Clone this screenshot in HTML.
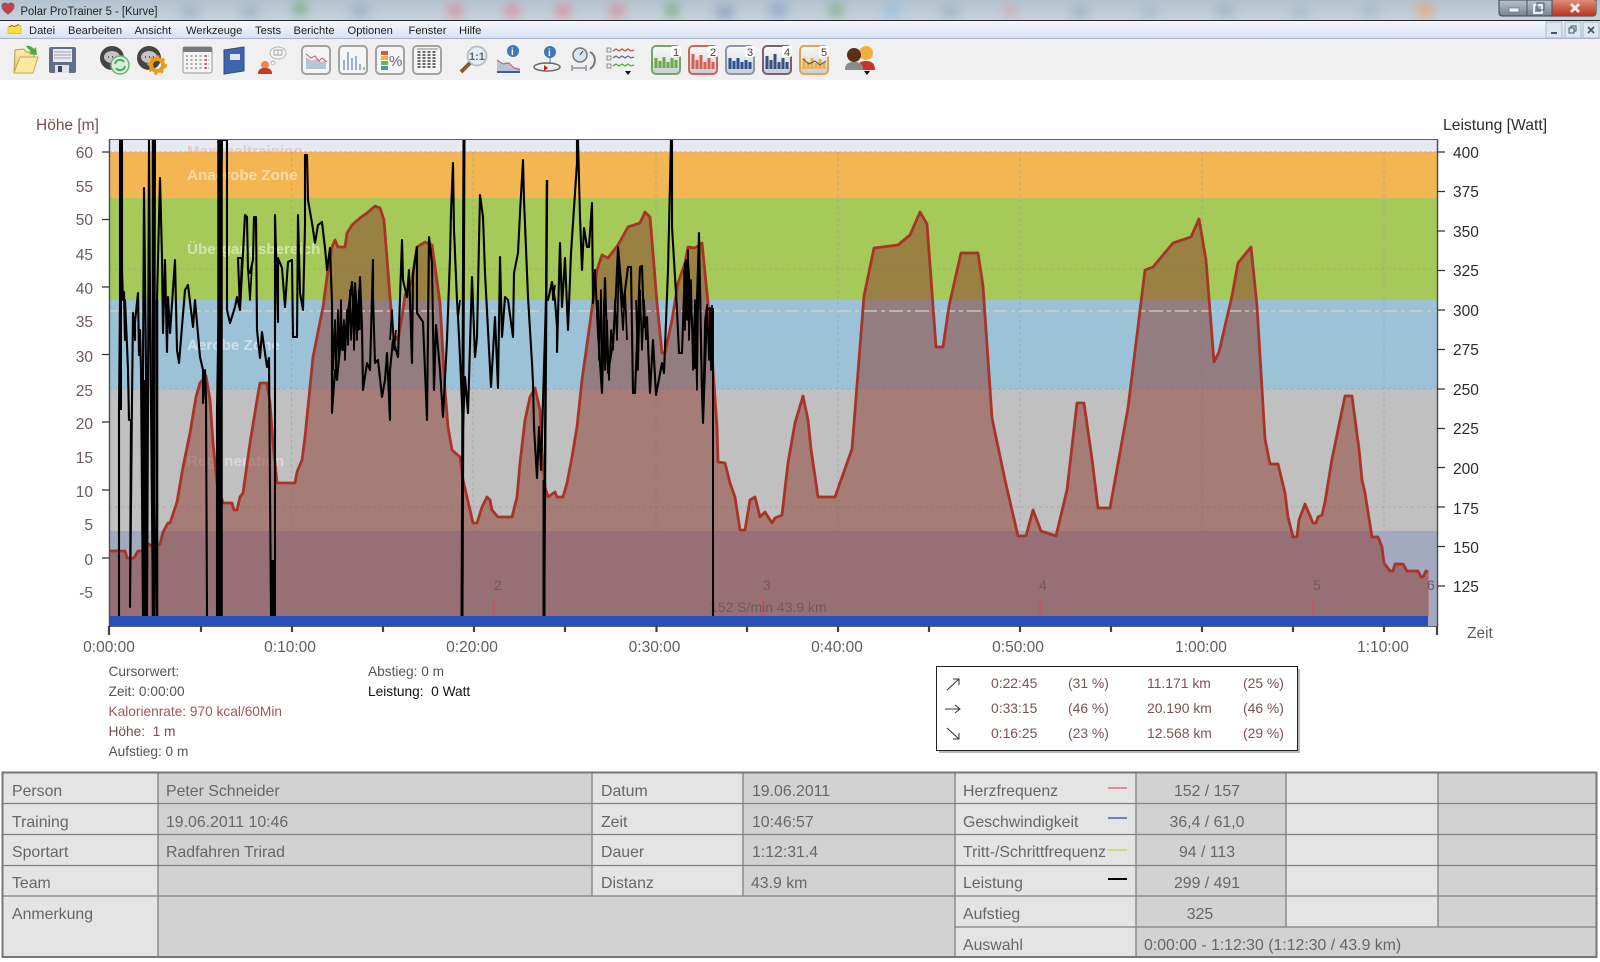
<!DOCTYPE html>
<html lang="de"><head><meta charset="utf-8"><title>Polar ProTrainer 5 - [Kurve]</title>
<style>
html,body{margin:0;padding:0;background:#fff;width:1600px;height:962px;overflow:hidden}
svg{display:block}
text{font-family:"Liberation Sans",sans-serif}
.m{font-size:11.2px;fill:#222}
.l{font-size:15.5px;fill:#6b5b5e}
.r{font-size:15.5px;fill:#2c2c2c}
.b{font-size:15.5px;fill:#5e5e5e}
.z{font-size:15.2px;font-weight:bold;fill:#fff;fill-opacity:.5}
.i{font-size:13.7px;fill:#555}
.x{font-size:13.9px;fill:#7d5255}
.t{font-size:15.85px;fill:#666}
.lap{font-size:14px;fill:#6e585e}
</style></head><body>
<svg width="1600" height="962" viewBox="0 0 1600 962" xmlns="http://www.w3.org/2000/svg">
<defs>
<filter id="bl" x="-50%" y="-50%" width="200%" height="200%"><feGaussianBlur stdDeviation="5"/></filter>
<linearGradient id="tb" x1="0" y1="0" x2="0" y2="1"><stop offset="0" stop-color="#b3c2cf"/><stop offset="1" stop-color="#c6d3dd"/></linearGradient>
<linearGradient id="mb" x1="0" y1="0" x2="0" y2="1"><stop offset="0" stop-color="#f5f8fd"/><stop offset="1" stop-color="#d9e2f0"/></linearGradient>
<linearGradient id="cl" x1="0" y1="0" x2="0" y2="1"><stop offset="0" stop-color="#e08a78"/><stop offset="1" stop-color="#b83320"/></linearGradient>
<linearGradient id="wb" x1="0" y1="0" x2="0" y2="1"><stop offset="0" stop-color="#b8c4cc"/><stop offset="1" stop-color="#75838e"/></linearGradient>
<linearGradient id="ic" x1="0" y1="0" x2="0" y2="1"><stop offset="0" stop-color="#fbfbfb"/><stop offset="1" stop-color="#c9ced6"/></linearGradient>
<linearGradient id="fo" x1="0" y1="0" x2="0" y2="1"><stop offset="0" stop-color="#fdf0b4"/><stop offset="1" stop-color="#e2bd5c"/></linearGradient>
<clipPath id="plot"><rect x="109" y="140" width="1328" height="486"/></clipPath>
</defs>

<!-- title bar -->
<rect width="1600" height="20" fill="url(#tb)"/>
<g filter="url(#bl)" opacity=".6">
<ellipse cx="300" cy="8" rx="7" ry="8" fill="#5d9e5a"/><ellipse cx="190" cy="12" rx="10" ry="6" fill="#8fa4bd"/><ellipse cx="250" cy="12" rx="10" ry="6" fill="#8fa4bd"/><ellipse cx="360" cy="11" rx="11" ry="6" fill="#8a9cc0"/>
<ellipse cx="455" cy="11" rx="8" ry="7" fill="#e8707c"/><ellipse cx="512" cy="11" rx="8" ry="7" fill="#e8707c"/><ellipse cx="563" cy="11" rx="8" ry="7" fill="#e8707c"/><ellipse cx="617" cy="11" rx="8" ry="7" fill="#e8707c"/>
<ellipse cx="672" cy="10" rx="7" ry="8" fill="#5d9e5a"/><ellipse cx="725" cy="12" rx="10" ry="6" fill="#6d86ac"/><ellipse cx="778" cy="10" rx="10" ry="8" fill="#7a9cc4"/><ellipse cx="836" cy="10" rx="7" ry="8" fill="#6aa060"/><ellipse cx="892" cy="11" rx="10" ry="7" fill="#86bee0"/>
<ellipse cx="950" cy="12" rx="10" ry="6" fill="#8fa4bd"/><ellipse cx="1010" cy="11" rx="8" ry="7" fill="#d8a0a8"/><ellipse cx="1080" cy="12" rx="10" ry="6" fill="#8fa4bd"/><ellipse cx="1150" cy="12" rx="10" ry="6" fill="#9ab0c4"/><ellipse cx="1225" cy="11" rx="10" ry="6" fill="#8fa4bd"/><ellipse cx="1300" cy="12" rx="10" ry="6" fill="#9ab0c4"/><ellipse cx="1370" cy="11" rx="10" ry="6" fill="#9ab0c4"/>
<ellipse cx="1425" cy="10" rx="10" ry="8" fill="#eca060"/>
</g>
<path d="M8 14c-4-3-6-5-6-8 0-2 2-3 3-3s2 .5 3 1.500c1-1 2-1.500 3-1.500s3 1 3 3c0 3-2 5-6 8z" fill="#c8404c" stroke="#7c5a60"/>
<text x="20.500" y="15" fill="#1c2228" style="font-size:11.5px" textLength="137" lengthAdjust="spacingAndGlyphs">Polar ProTrainer 5 - [Kurve]</text>
<!-- window buttons -->
<path d="M1499 0v13a3 3 0 0 0 3 3h91a3 3 0 0 0 3-3v-13z" fill="url(#wb)" stroke="#3a4148"/>
<rect x="1552" y="0" width="44" height="16" rx="2" fill="url(#cl)"/>
<path d="M1527 0v16M1552 0v16" stroke="#4a5058"/>
<rect x="1509" y="8" width="10" height="4" fill="#eef2f4" stroke="#55606a" stroke-width=".6"/>
<rect x="1534" y="5" width="8" height="8" fill="none" stroke="#e8eef2" stroke-width="2"/><rect x="1537" y="3" width="7" height="7" fill="none" stroke="#40484f" stroke-width=".8"/>
<path d="M1571 4l8 8M1579 4l-8 8" stroke="#f4e8df" stroke-width="3"/>
<!-- menu bar -->
<rect y="20" width="1600" height="1.500" fill="#222"/>
<rect y="21" width="1600" height="17" fill="url(#mb)"/>
<rect y="38" width="1600" height="1" fill="#aab0c6"/>
<path d="M8 27l4-2 2 1.500 4-1.500 3 .5v8H8z" fill="#f6e23e" stroke="#d8b830" stroke-width=".7"/><path d="M9 27l3-1.500 2 1 5-2" fill="none" stroke="#c83a30" stroke-width=".9"/>
<text class="m" x="29" y="34">Datei</text><text class="m" x="68" y="34">Bearbeiten</text><text class="m" x="134.500" y="34">Ansicht</text><text class="m" x="186" y="34">Werkzeuge</text><text class="m" x="255" y="34">Tests</text><text class="m" x="293.500" y="34">Berichte</text><text class="m" x="347.500" y="34">Optionen</text><text class="m" x="408.500" y="34">Fenster</text><text class="m" x="459" y="34">Hilfe</text>
<g fill="#dde7f2" stroke="#a9b7c4"><rect x="1546" y="22" width="16" height="16"/><rect x="1565" y="22" width="16" height="16"/><rect x="1583" y="22" width="16" height="16"/></g>
<path d="M1551 33h6" stroke="#45566a" stroke-width="2"/><path d="M1569 28h5v5h-5zM1571 28v-2h5v5h-2" fill="none" stroke="#45566a"/><path d="M1588 27l6 6M1594 27l-6 6" stroke="#45566a" stroke-width="1.800"/>

<!-- toolbar -->
<rect y="39" width="1600" height="41" fill="#f0f0f0"/>
<!-- open -->
<path d="M15 50l9-1 2 3 8 0v5l4 0-6 16H14z" fill="url(#fo)" stroke="#b0985c"/><path d="M20 57h18l-5 16H14z" fill="#fae9a0" stroke="#caa850"/><path d="M26 46c4-1 6 1 8 3l2-2 1 8-8-1 2-2c-1-2-3-3-5-6z" fill="#55a83e"/>
<!-- save -->
<rect x="49" y="47" width="27" height="26" rx="2" fill="#5f6f86"/><rect x="53" y="49" width="19" height="13" fill="#e9ebef"/><path d="M54 52h17M54 55h17M54 58h17" stroke="#9aa2b0"/><rect x="55" y="65" width="14" height="8" fill="#dfe2e6"/><rect x="58" y="66" width="4" height="6" fill="#3b4452"/>
<!-- chat refresh -->
<circle cx="112" cy="58" r="12" fill="#444"/><ellipse cx="112" cy="57" rx="8" ry="6" fill="#c4c4c8"/><path d="M108 57h1M112 57h1M116 57h1" stroke="#333" stroke-width="1.500"/><circle cx="120" cy="65" r="9" fill="#d8efd8" stroke="#73b078" stroke-width="1.500"/><path d="M115 64a5 5 0 0 1 9-2M125 66a5 5 0 0 1-9 2" fill="none" stroke="#4ea85a" stroke-width="2"/>
<!-- chat gear -->
<circle cx="149" cy="58" r="12" fill="#444"/><ellipse cx="149" cy="57" rx="8" ry="6" fill="#c4c4c8"/><path d="M145 57h1M149 57h1M153 57h1" stroke="#333" stroke-width="1.500"/><circle cx="157" cy="65" r="6" fill="none" stroke="#e89c1a" stroke-width="4"/><circle cx="157" cy="65" r="8.500" fill="none" stroke="#e89c1a" stroke-width="2.500" stroke-dasharray="3 3.500"/>
<!-- calendar -->
<rect x="183" y="47" width="29" height="26" rx="2" fill="#f4f4f4" stroke="#999"/><rect x="183" y="47" width="29" height="5" fill="#77797e"/><g fill="none" stroke="#a9a9b0" stroke-width="2" stroke-dasharray="2 2.500"><path d="M186 56h23M186 60h23M186 64h23M186 68h23"/></g><path d="M206 55v15" stroke="#d56d6d" stroke-width="2" stroke-dasharray="2 2"/>
<!-- book -->
<path d="M224 50l20-3v24l-20 3z" fill="#3e65ad" stroke="#2d4c88"/><rect x="230" y="54" width="10" height="6" fill="#dfe6f0"/>
<!-- person bubble -->
<circle cx="265" cy="65" r="4" fill="#e8874f"/><path d="M258 74c0-5 3-6 7-6s7 1 7 6z" fill="#c63a28"/><ellipse cx="278" cy="53" rx="8" ry="6" fill="#f6f6f6" stroke="#b5b5b5"/><path d="M274 50h8v5h-8zM278 50v5" fill="none" stroke="#888" stroke-width=".7"/><circle cx="273" cy="63" r="2" fill="#f6f6f6" stroke="#b5b5b5"/>
<!-- framed -->
<g fill="#f5f5f5" stroke="#a2a2a2" stroke-width="2"><rect x="302" y="46" width="28" height="28" rx="4"/><rect x="339" y="46" width="28" height="28" rx="4"/><rect x="376" y="46" width="28" height="28" rx="4"/><rect x="413" y="46" width="28" height="28" rx="4"/></g>
<path d="M306 57l6 4 5-3 4 4 5-2v9h-20z" fill="#b7c4d6"/><path d="M306 54l5 4 4-2 4 5 3-3 5 4" fill="none" stroke="#d2585e"/>
<path d="M344 70V60M348 70V52M352 70V58M356 70V56M360 70V64M364 70V67" stroke="#9fb1c6" stroke-width="2"/>
<rect x="381" y="51" width="7" height="4" fill="#d8543c"/><rect x="381" y="56" width="7" height="4" fill="#eab53c"/><rect x="381" y="61" width="7" height="4" fill="#74b04a"/><rect x="381" y="66" width="7" height="4" fill="#5d8cc0"/><text x="389" y="66" fill="#667" style="font-size:15px">%</text>
<g stroke="#666" stroke-width="3" stroke-dasharray="2 1"><path d="M419 51v18M424 51v18M429 51v18M434 51v18"/></g><path d="M417 49h21" stroke="#888"/>
<!-- magnifier -->
<circle cx="477" cy="56" r="9.500" fill="#e6eef5" stroke="#b5c2cc" stroke-width="2"/><text x="469" y="60" style="font-size:11px" fill="#666" font-weight="bold">1:1</text><path d="M470 63l-9 9" stroke="#8a5a28" stroke-width="4"/>
<!-- info chart -->
<circle cx="513" cy="51" r="6" fill="#3e78b8"/><text x="511" y="55" style="font-size:10px" fill="#fff" font-weight="bold">i</text><path d="M497 72v-12l6 3 5-1 6 5 6 1v4z" fill="#b7c4d6"/><path d="M497 60l6 4 6-1 5 5 6 2" fill="none" stroke="#d2585e"/><path d="M497 72h23" stroke="#3d5e98" stroke-width="2"/>
<!-- info ellipse -->
<circle cx="550" cy="52" r="6" fill="#3e78b8"/><text x="548" y="56" style="font-size:10px" fill="#fff" font-weight="bold">i</text><path d="M550 58v6" stroke="#3e78b8"/><ellipse cx="547" cy="67" rx="13" ry="4" fill="none" stroke="#666" stroke-width="1.500"/><path d="M544 65l4 3-4 3z" fill="#c22"/>
<!-- dial -->
<circle cx="580" cy="55" r="7" fill="#d5e6f2" stroke="#777" stroke-width="1.500"/><path d="M580 55l3-4" stroke="#333"/><path d="M572 68h14M572 65v6M586 65v6" stroke="#a0a8b6" stroke-width="2"/><path d="M590 52c6 3 7 12 0 17" fill="none" stroke="#777" stroke-width="2"/>
<!-- lines -->
<g fill="none" stroke-width="1.200"><path d="M613 51l3-2 3 2 3-2 3 2 3-2 3 2 3-1" stroke="#d8453c"/><path d="M613 58l3-2 3 2 3-2 3 2 3-2 3 2 3-1" stroke="#4e6aa0"/><path d="M613 66l3-2 3 2 3-2 3 2 3-2 3 2 3-1" stroke="#5a9e48"/></g><g fill="#eee" stroke="#777" stroke-width=".8"><rect x="607" y="48" width="4" height="4"/><rect x="607" y="56" width="4" height="4"/><rect x="607" y="64" width="4" height="4"/></g><path d="M625 71h6l-3 4z" fill="#111"/>
<!-- numbered -->
<g stroke-width="2" fill="url(#ic)"><rect x="652" y="46" width="28" height="28" rx="4" stroke="#6fa860"/><rect x="689" y="46" width="28" height="28" rx="4" stroke="#d0645c"/><rect x="726" y="46" width="28" height="28" rx="4" stroke="#8a96a8"/><rect x="763" y="46" width="28" height="28" rx="4" stroke="#7d6070"/><rect x="800" y="46" width="28" height="28" rx="4" stroke="#e8a056"/></g>
<path d="M656 68V58M660 68V61M664 68V57M668 68V62M672 68V58M676 68V60" stroke="#6aa844" stroke-width="3"/>
<path d="M693 69V54M697 69V60M701 69V55M705 69V62M709 69V58M713 69V62" stroke="#d8604e" stroke-width="3"/>
<path d="M730 69V58M734 69V61M738 69V58M742 69V62M746 69V60M750 69V62" stroke="#2a4f90" stroke-width="3"/>
<path d="M767 69V56M771 69V60M775 69V54M779 69V62M783 69V58M787 69V62" stroke="#3a4f80" stroke-width="3"/>
<path d="M804 69V58M808 69V62M812 69V58M816 69V63M820 69V59M824 69V62" stroke="#eeaa3e" stroke-width="3"/><path d="M803 59l6 5 6-3 5 4 6-4" fill="none" stroke="#66503a"/>
<g fill="#fff"><rect x="671" y="46" width="10" height="11" rx="2"/><rect x="708" y="46" width="10" height="11" rx="2"/><rect x="745" y="46" width="10" height="11" rx="2"/><rect x="782" y="46" width="10" height="11" rx="2"/><rect x="819" y="46" width="10" height="11" rx="2"/></g>
<g fill="#444"><text x="673" y="56" style="font-size:11px">1</text><text x="710" y="56" style="font-size:11px">2</text><text x="747" y="56" style="font-size:11px">3</text><text x="784" y="56" style="font-size:11px">4</text><text x="821" y="56" style="font-size:11px">5</text></g>
<!-- people -->
<circle cx="866" cy="53" r="7" fill="#efb03c"/><path d="M857 70c0-7 4-9 9-9s9 2 9 9z" fill="#c6342c"/><circle cx="854" cy="55" r="7" fill="#5a3018"/><path d="M845 70c0-7 4-8 9-8s9 1 9 8z" fill="#8a8a8a"/><path d="M864 71h6l-3 4z" fill="#111"/>

<!-- plot zones -->
<rect x="109" y="140" width="1328" height="12" fill="#e5e9f1"/>
<text x="187" y="156" style="font-size:15.2px;font-weight:bold" fill="#efc6c8">Maximaltraining</text>
<rect x="109" y="152" width="1328" height="46" fill="#f4b653"/>
<rect x="109" y="198" width="1328" height="102" fill="#a5ca5a"/>
<rect x="109" y="300" width="1328" height="89" fill="#9cc2d7"/>
<rect x="109" y="389" width="1328" height="142" fill="#c0c0c0"/>
<rect x="109" y="531" width="1328" height="95" fill="#a3a9bf"/>
<g stroke="#999" stroke-dasharray="3 3" stroke-width="1" fill="none" opacity=".55">
<path d="M291.500 152V531M473 152V531M656 152V531M838 152V531M1020 152V531M1202 152V531M1384 152V531"/>
<path d="M109 269H1437M109 389H1437M109 507H1437"/>
</g>
<path d="M109 152H1437" stroke="#e0a08a" stroke-dasharray="3 2"/>
<text class="z" x="187" y="180">Anaerobe Zone</text>
<text class="z" x="187" y="254">Übergangsbereich</text>
<text class="z" x="187" y="350">Aerobe Zone</text>
<text class="z" x="187" y="466" style="fill-opacity:.4">Regeneration</text>

<!-- height curve -->
<g clip-path="url(#plot)">
<path fill="#8c382c" fill-opacity=".5" stroke="none" d="M109 616V551L125 551 127 558 134 558 138 551 147 551 147 543 153 547 160 544 163 532 168 523 170 523 177 502 183 467 190 433 196 397 200 383 206 376 210 400 213 443 217 483 223 503 232 503 234 510 237 510 240 497 243 493 250 443 257 400 260 383 267 383 270 403 273 443 277 483 295 483 297 472 302 460 305 437 313 357 323 307 328 270 332 247 335 240 338 247 345 247 347 233 352 225 360 218 367 213 375 206 380 208 384 220 390 297 393 333 398 340 402 317 405 295 412 280 417 247 425 242 432 245 440 303 445 390 448 427 452 450 460 457 463 480 473 523 477 523 482 507 487 497 490 500 492 510 498 517 512 517 517 497 520 463 525 420 530 397 535 388 540 410 542 453 545 487 548 497 555 492 557 497 563 497 567 483 572 457 577 427 582 380 590 323 597 270 602 255 608 258 618 245 628 227 640 223 645 212 650 217 653 253 657 303 662 353 665 353 672 320 678 283 685 263 688 247 695 248 702 243 708 303 713 370 717 427 718 462 725 463 730 483 735 497 740 530 745 530 750 500 755 497 760 517 765 512 772 523 775 518 782 515 788 463 795 423 803 396 808 420 811 449 818 497 835 497 852 449 864 296 874 248 898 245 910 235 920 212 927 224 936 347 943 347 949 306 961 253 978 253 983 286 992 418 1005 480 1018 536 1026 536 1033 510 1041 531 1056 536 1067 490 1077 403 1084 403 1092 459 1098 508 1110 508 1128 408 1145 270 1153 267 1173 243 1191 237 1199 219 1206 260 1214 362 1219 352 1232 296 1238 263 1251 247 1257 306 1265 439 1270 464 1278 464 1285 493 1288 517 1293 537 1297 537 1299 520 1305 504 1313 523 1316 523 1318 517 1322 515 1325 502 1332 459 1345 396 1352 396 1359 449 1362 480 1365 493 1372 537 1378 537 1382 547 1384 563 1390 571 1393 571 1395 564 1403 564 1407 571 1418 571 1421 577 1423 577 1426 571 1428 572 1428 616Z"/>
<path fill="none" stroke="#d6dcb8" stroke-opacity=".8" stroke-width="1.400" stroke-dasharray="14 4 4 4" d="M109 311H1437"/>
<path fill="none" stroke="#a83428" stroke-width="2.800" stroke-linejoin="round" d="M109 551L125 551 127 558 134 558 138 551 147 551 147 543 153 547 160 544 163 532 168 523 170 523 177 502 183 467 190 433 196 397 200 383 206 376 210 400 213 443 217 483 223 503 232 503 234 510 237 510 240 497 243 493 250 443 257 400 260 383 267 383 270 403 273 443 277 483 295 483 297 472 302 460 305 437 313 357 323 307 328 270 332 247 335 240 338 247 345 247 347 233 352 225 360 218 367 213 375 206 380 208 384 220 390 297 393 333 398 340 402 317 405 295 412 280 417 247 425 242 432 245 440 303 445 390 448 427 452 450 460 457 463 480 473 523 477 523 482 507 487 497 490 500 492 510 498 517 512 517 517 497 520 463 525 420 530 397 535 388 540 410 542 453 545 487 548 497 555 492 557 497 563 497 567 483 572 457 577 427 582 380 590 323 597 270 602 255 608 258 618 245 628 227 640 223 645 212 650 217 653 253 657 303 662 353 665 353 672 320 678 283 685 263 688 247 695 248 702 243 708 303 713 370 717 427 718 462 725 463 730 483 735 497 740 530 745 530 750 500 755 497 760 517 765 512 772 523 775 518 782 515 788 463 795 423 803 396 808 420 811 449 818 497 835 497 852 449 864 296 874 248 898 245 910 235 920 212 927 224 936 347 943 347 949 306 961 253 978 253 983 286 992 418 1005 480 1018 536 1026 536 1033 510 1041 531 1056 536 1067 490 1077 403 1084 403 1092 459 1098 508 1110 508 1128 408 1145 270 1153 267 1173 243 1191 237 1199 219 1206 260 1214 362 1219 352 1232 296 1238 263 1251 247 1257 306 1265 439 1270 464 1278 464 1285 493 1288 517 1293 537 1297 537 1299 520 1305 504 1313 523 1316 523 1318 517 1322 515 1325 502 1332 459 1345 396 1352 396 1359 449 1362 480 1365 493 1372 537 1378 537 1382 547 1384 563 1390 571 1393 571 1395 564 1403 564 1407 571 1418 571 1421 577 1423 577 1426 571 1428 572"/>

<!-- laps -->
<path d="M494 597V616M763 597V616M1040 597V616M1313 597V616M1428 572V616" stroke="#d8484c" stroke-width="1"/>
<text class="lap" x="494" y="590">2</text><text class="lap" x="763" y="590">3</text><text class="lap" x="1039" y="590">4</text><text class="lap" x="1313" y="590">5</text><text class="lap" x="1427" y="590">6</text>
<text x="710" y="612" style="font-size:14px" fill="#6e585e">152 S/min 43.9 km</text>

<!-- power curve -->
<path fill="none" stroke="#000" stroke-width="2.100" stroke-linejoin="round" d="M119 616 119 410 120 300 120 140 122 140 122 270 123 300 124 292 125 340 125 300 127 345 128 370 129 420 131 420 130 607 132 400 133 313 135 340 135 322 138 293 139 355 140 330 141 370 143 616 143 370 144 188 146 370 147 616 148 400 149 140 150 300 153 616 153 140 155 140 154 500 157 616 157 300 160 178 162 257 163 333 165 260 167 352 168 297 170 333 175 260 177 350 179 363 185 290 188 285 193 327 195 300 200 357 203 370 203 403 205 370 206 400 207 616 M217 616 217 410 218 350 222 140 227 140 227 310 230 323 235 307 237 297 240 310 238 258 242 258 240 310 245 215 247 217 248 270 250 273 253 260 254 217 256 217 257 330 260 358 262 332 267 367 269 358 271 616 M275 616 275 215 278 322 278 258 282 268 285 307 288 262 292 260 293 337 297 337 298 215 300 293 303 310 305 225 305 155 307 155 308 200 312 223 315 243 318 225 322 222 325 248 327 270 330 248 332 303 332 413 335 370 337 380 342 327 343 350 352 282 354 327 355 283 358 330 360 277 362 327 363 390 367 363 370 370 373 260 373 297 375 363 378 360 382 397 385 380 387 353 390 420 390 370 393 340 398 357 402 240 403 280 407 297 409 270 412 363 413 273 417 247 417 313 423 322 427 420 429 237 432 263 434 390 436 325 440 370 443 417 447 340 450 257 451 213 453 163 454 230 457 300 458 317 460 357 463 427 465 377 468 413 472 277 475 357 477 337 480 195 483 217 485 273 488 330 491 387 495 317 498 388 500 257 502 337 505 297 508 300 513 337 514 273 518 253 520 213 523 160 524 200 528 297 532 363 533 383 534 427 537 478 539 427 541 470 546 300 548 300 552 282 555 300 557 327 557 352 560 243 562 307 565 258 568 330 571 253 573 223 577 163 577 140 578 140 580 217 582 270 584 228 587 247 589 247 592 203 593 303 595 270 598 333 602 393 605 278 608 373 613 343 616 293 618 247 622 293 623 307 628 267 631 267 633 393 635 393 640 267 642 266 644 327 647 317 650 393 653 340 656 395 662 363 664 373 668 270 671 140 672 140 672 227 677 310 679 353 682 353 685 263 688 262 695 368 699 233 702 393 703 423 707 310 710 308 711 363 712 363 713 308"/>
<path fill="none" stroke="#000" stroke-width="1.700" stroke-linejoin="round" d="M332 300 333 370 335 320 336 375 338 310 339 360 341 300 342 350 344 320 345 360 347 310 348 345 350 290 351 340 353 300 354 350 356 300 357 340 359 290 360 330M390 340 392 310 394 350 396 330M598 300 599 360 601 290 602 390 604 300 605 370 607 320 609 380 611 330 613 350 615 300 617 340 619 260 621 300 623 330 625 290 627 340M636 300 638 370 640 290 642 350 644 300 646 340M684 270 685 330 686 260 687 320 688 250 689 340 691 280 693 370 695 300 697 390 699 240 701 350 703 420 705 320 707 305 709 360 710 310 711 370 712 305M248 270 250 300 252 265M457 300 458 318 460 300M552 282 553 300 555 285"/>
<g stroke="#000" fill="none">
<path d="M120.500 140V410" stroke-width="3"/>
<path d="M145 380V616" stroke-width="4.500"/>
<path d="M153.500 140V616" stroke-width="3.500"/>
<path d="M157 300V616" stroke-width="2.500"/>
<path d="M220 140V616" stroke-width="5.500"/>
<path d="M227 140V310" stroke-width="1.600"/>
<path d="M272.500 560V616" stroke-width="3"/>
<path d="M464 140 462 616" stroke-width="3"/>
<path d="M547 180 544 616" stroke-width="2.500"/>
<path d="M544 480V616" stroke-width="3"/>
<path d="M713 308V616" stroke-width="2"/>
</g>
<rect x="109" y="616" width="1319" height="10" fill="#2850bb"/>
</g>

<!-- axes -->
<path d="M109.500 139.500H1437.500V626.500H109.500Z" fill="none" stroke="#5d6164" stroke-width="1"/>
<path d="M109.500 139.500V626.500M1437.500 139.500V626.500" stroke="#4e5256" stroke-width="1.500"/>
<path d="M102 152H109M102 219.500H109M102 287H109M102 354.500H109M102 422H109M102 490H109M102 558H109" stroke="#333" stroke-width="1.300"/>
<g stroke="#333" stroke-width="1.300"><path d="M1437 152h8M1437 191.500h8M1437 231h8M1437 270.500h8M1437 310h8M1437 349.500h8M1437 389h8M1437 428.500h8M1437 467.500h8M1437 507h8M1437 546.500h8M1437 586h8"/></g>
<g stroke="#444" stroke-width="2.200"><path d="M109 626v9M201 626v6M292 626v6M383 626v6M474 626v6M565 626v6M656.500 626v6M747 626v6M838 626v6M929 626v6M1020 626v6M1111 626v6M1202 626v6M1293 626v6M1384 626v6M1437 626v9"/></g>
<g text-anchor="end"><text class="l" x="93" y="158">60</text><text class="l" x="93" y="192">55</text><text class="l" x="93" y="225">50</text><text class="l" x="93" y="260">45</text><text class="l" x="93" y="294">40</text><text class="l" x="93" y="327">35</text><text class="l" x="93" y="362">30</text><text class="l" x="93" y="396">25</text><text class="l" x="93" y="429">20</text><text class="l" x="93" y="463">15</text><text class="l" x="93" y="497">10</text><text class="l" x="93" y="530">5</text><text class="l" x="93" y="565">0</text><text class="l" x="93" y="598">-5</text></g>
<g><text class="r" x="1453" y="158">400</text><text class="r" x="1453" y="197">375</text><text class="r" x="1453" y="237">350</text><text class="r" x="1453" y="276">325</text><text class="r" x="1453" y="316">300</text><text class="r" x="1453" y="355">275</text><text class="r" x="1453" y="395">250</text><text class="r" x="1453" y="434">225</text><text class="r" x="1453" y="474">200</text><text class="r" x="1453" y="514">175</text><text class="r" x="1453" y="553">150</text><text class="r" x="1453" y="592">125</text></g>
<g text-anchor="middle"><text class="b" x="109" y="652">0:00:00</text><text class="b" x="290" y="652">0:10:00</text><text class="b" x="472" y="652">0:20:00</text><text class="b" x="654.500" y="652">0:30:00</text><text class="b" x="837" y="652">0:40:00</text><text class="b" x="1018" y="652">0:50:00</text><text class="b" x="1201" y="652">1:00:00</text><text class="b" x="1383" y="652">1:10:00</text></g>
<text x="36" y="130" class="l" style="fill:#7a4c50">Höhe [m]</text>
<text x="1443" y="130" class="r" style="font-size:15.7px">Leistung [Watt]</text>
<text x="1467" y="638" class="b">Zeit</text>

<!-- cursor info -->
<text class="i" x="108.500" y="676">Cursorwert:</text>
<text class="i" x="108.500" y="696">Zeit: 0:00:00</text>
<text class="i" x="108.500" y="716" style="fill:#a2555e">Kalorienrate: 970 kcal/60Min</text>
<text class="i" x="108.500" y="736" style="fill:#7a4c50">Höhe:&#160; 1 m</text>
<text class="i" x="108.500" y="756">Aufstieg: 0 m</text>
<text class="i" x="368" y="676">Abstieg: 0 m</text>
<text class="i" x="368" y="696" style="fill:#111">Leistung:&#160; 0 Watt</text>

<!-- stats box -->
<rect x="939" y="669" width="361" height="84" fill="#b8b8b8"/>
<rect x="936.500" y="666.500" width="361" height="84" fill="#fff" stroke="#222"/>
<path d="M947 690l12-11M953 679h6v6" fill="none" stroke="#333"/><path d="M945 709h15M955 705l5 4-5 4" fill="none" stroke="#333"/><path d="M947 728l12 11M953 739h6v-6" fill="none" stroke="#333"/>
<text class="x" x="991" y="688">0:22:45</text><text class="x" x="1068" y="688">(31 %)</text><text class="x" x="1147" y="688">11.171 km</text><text class="x" x="1243" y="688">(25 %)</text>
<text class="x" x="991" y="713">0:33:15</text><text class="x" x="1068" y="713">(46 %)</text><text class="x" x="1147" y="713">20.190 km</text><text class="x" x="1243" y="713">(46 %)</text>
<text class="x" x="991" y="738">0:16:25</text><text class="x" x="1068" y="738">(23 %)</text><text class="x" x="1147" y="738">12.568 km</text><text class="x" x="1243" y="738">(29 %)</text>

<!-- table -->
<rect x="2" y="772" width="1595" height="185" fill="#d2d2d2"/>
<g fill="#e4e4e4"><rect x="3" y="773" width="155" height="184"/><rect x="592" y="773" width="151" height="123"/><rect x="955" y="773" width="181" height="184"/><rect x="1286" y="773" width="152" height="154"/></g>
<g stroke="#808080" stroke-width="1.300" fill="none">
<path d="M3 803.500H1597M3 834.500H1597M3 865.500H1597M3 896H1597M955 927H1597"/>
<path d="M158 772V957M592 772V896M743 772V896M955 772V957M1136 772V957M1286 772V927M1438 772V927"/>
</g>
<rect x="2.500" y="772.500" width="1594" height="184.500" fill="none" stroke="#777" stroke-width="2"/>
<text class="t" x="12" y="796">Person</text><text class="t" x="166" y="796">Peter Schneider</text><text class="t" x="601" y="796">Datum</text><text class="t" x="752" y="796">19.06.2011</text><text class="t" x="963" y="796">Herzfrequenz</text><text class="t" x="1207" y="796" text-anchor="middle">152 / 157</text>
<text class="t" x="12" y="827">Training</text><text class="t" x="166" y="827">19.06.2011 10:46</text><text class="t" x="601" y="827">Zeit</text><text class="t" x="752" y="827">10:46:57</text><text class="t" x="963" y="827">Geschwindigkeit</text><text class="t" x="1207" y="827" text-anchor="middle">36,4 / 61,0</text>
<text class="t" x="12" y="857">Sportart</text><text class="t" x="166" y="857">Radfahren Trirad</text><text class="t" x="601" y="857">Dauer</text><text class="t" x="752" y="857">1:12:31.4</text><text class="t" x="963" y="857">Tritt-/Schrittfrequenz</text><text class="t" x="1207" y="857" text-anchor="middle">94 / 113</text>
<text class="t" x="12" y="888">Team</text><text class="t" x="601" y="888">Distanz</text><text class="t" x="751" y="888">43.9 km</text><text class="t" x="963" y="888">Leistung</text><text class="t" x="1207" y="888" text-anchor="middle">299 / 491</text>
<text class="t" x="12" y="919">Anmerkung</text><text class="t" x="963" y="919">Aufstieg</text><text class="t" x="1200" y="919" text-anchor="middle">325</text>
<text class="t" x="963" y="950">Auswahl</text><text class="t" x="1144" y="950">0:00:00 - 1:12:30 (1:12:30 / 43.9 km)</text>
<path d="M1108 788h19" stroke="#d8757c" stroke-width="1.500"/><path d="M1108 818h19" stroke="#4a62a0" stroke-width="1.500"/><path d="M1108 850h19" stroke="#c8d468" stroke-width="1.500"/><path d="M1108 879h19" stroke="#000" stroke-width="2"/>
</svg>
</body></html>
